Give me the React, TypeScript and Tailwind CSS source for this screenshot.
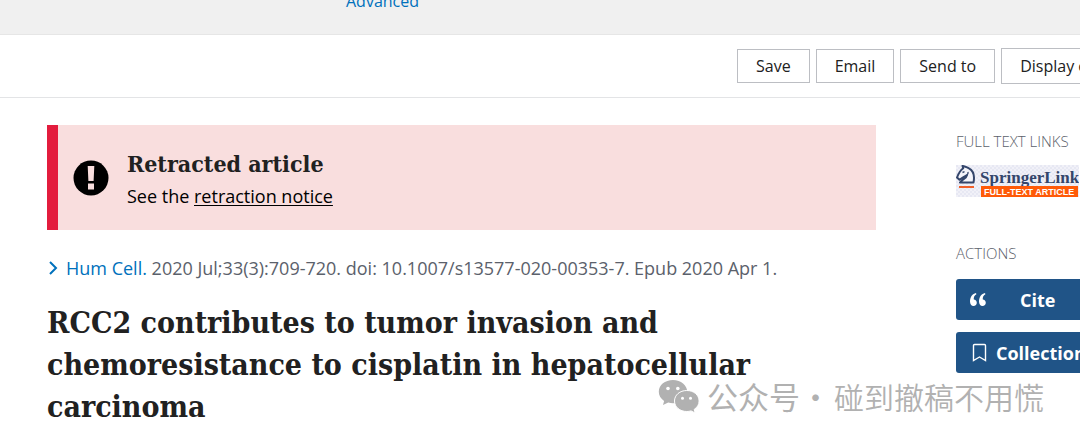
import React from "react";

function ToolbarButton({ className = "", children }: { className?: string; children: React.ReactNode }) {
  return (
    <button type="button" className={`shrink-0 border border-[#bcbec3] bg-white px-[18px] text-left text-base leading-6 text-[#212121] ${className}`}>
      {children}
    </button>
  );
}

function SpringerLogo() {
  return (
    <svg viewBox="0 0 123 32" className="block h-8 w-[123px]" role="img" aria-label="SpringerLink full-text article">
      <defs>
        <pattern id="weave" width="4" height="4" patternUnits="userSpaceOnUse">
          <rect width="4" height="4" fill="#f1f1f8" />
          <path d="M0 0h2v2H0zM2 2h2v2H2z" fill="#e7e8f3" />
        </pattern>
      </defs>
      <rect width="123" height="32" fill="url(#weave)" />
      <path d="M4 17.500h13.500c1.400-7-.5-12-4.500-14.200C10.500 1.800 8 1.500 6.500.8l.7 2.500C5 5 2.500 8.500 1 12.500l2.500 2.300 3.200-2.200 4.300-2.600C10.500 13.500 6 14.500 4 17.500z" fill="#f4f4fa" stroke="#34466b" strokeWidth="2" strokeLinejoin="round" />
      <path d="M6.500 7.500l2-.8M11 10c1-1 1.200-2 1-3" fill="none" stroke="#34466b" strokeWidth="1.400" />
      <rect x="3" y="21" width="15" height="2" fill="#f0602a" />
      <text x="24" y="18" fill="#34466b" fontSize="17" fontWeight="700" fontFamily="'Liberation Serif', serif">SpringerLink</text>
      <rect x="25" y="21" width="97" height="11" fill="#ff5a08" />
      <text x="28" y="30" fill="#fff" fontSize="9" fontWeight="700" fontFamily="'Liberation Sans', sans-serif">FULL-TEXT ARTICLE</text>
    </svg>
  );
}

function WeChatMark() {
  return (
    <svg viewBox="0 0 42 34" className="h-[34px] w-[42px] shrink-0" aria-hidden="true">
      <path d="M15 1C7 1 .8 6 .8 12.700c0 3.800 2 7 5.300 9.200L5 26l5.200-2.500c1.600.4 3.200.7 4.800.7 8 0 14.200-5 14.200-11.500S23 1 15 1z" fill="#b1b1b1" />
      <path d="M28.800 11.500c-7 0-12.300 4.600-12.300 10.500s5.300 10.500 12.300 10.500c1.500 0 2.900-.2 4.200-.6l4.200 2.100-1-3.600c3-2 4.900-4.800 4.900-8.400 0-5.900-5.300-10.500-12.300-10.500z" fill="#b1b1b1" stroke="#fff" strokeWidth="1" />
      <g fill="#fff">
        <circle cx="10" cy="9.500" r="1.800" />
        <circle cx="19.800" cy="9.500" r="1.800" />
        <circle cx="24.500" cy="19.300" r="1.500" />
        <circle cx="32.500" cy="19.300" r="1.500" />
      </g>
    </svg>
  );
}

export default function App() {
  return (
    <div className="relative overflow-hidden bg-white font-['Open_Sans','Noto_Sans',sans-serif] text-[#212121]">
      <header className="h-[35px] overflow-hidden border-b border-[#e6e6e6] bg-[#f0f0f0] pl-[346px]">
        <a href="#advanced" className="-mt-[11px] block w-fit text-base leading-6 text-[#0071bc]">Advanced</a>
      </header>

      <div className="flex h-[63px] items-center justify-end border-b border-[#e3e4e6]">
        <div className="flex w-[343px] items-center gap-1.5 whitespace-nowrap">
          <ToolbarButton className="py-1">Save</ToolbarButton>
          <ToolbarButton className="py-1">Email</ToolbarButton>
          <ToolbarButton className="py-1">Send to</ToolbarButton>
          <ToolbarButton className="py-[5px]">Display options</ToolbarButton>
        </div>
      </div>

      <div className="flex pt-[27px] pl-[47px]">
        <main className="min-w-0 flex-1">
          <section className="flex h-[105px] items-center border-l-[11px] border-[#e31c3d] bg-[#f9dede] pt-1 pl-[15px]">
            <svg viewBox="0 0 36 36" className="mb-1 h-9 w-9 shrink-0" aria-hidden="true">
              <circle cx="18" cy="18" r="17.500" fill="#000" />
              <path d="M14.700 6h6.600l-.7 15h-5.200zM15 23.500h6v6h-6z" fill="#f9dede" />
            </svg>
            <div className="pl-[18px]">
              <h2 className="font-['DejaVu_Serif_Condensed','DejaVu_Serif',serif] text-[23px] leading-8 font-bold">Retracted article</h2>
              <p className="text-lg leading-8 text-black">
                See the <a href="#notice" className="underline underline-offset-2">retraction notice</a>
              </p>
            </div>
          </section>

          <p className="flex items-center pt-[26px] text-lg leading-6 text-[#5b616b]">
            <svg viewBox="0 0 12 16" className="mr-[7px] h-4 w-3 shrink-0" aria-hidden="true">
              <path d="M3 2l6 6-6 6" fill="none" stroke="#0071bc" strokeWidth="2" />
            </svg>
            <span>
              <a href="#journal" className="text-[#0071bc]">Hum Cell.</a> 2020 Jul;33(3):709-720. doi: 10.1007/s13577-020-00353-7. Epub 2020 Apr 1.
            </span>
          </p>

          <h1 className="pt-[22px] font-['DejaVu_Serif_Condensed','DejaVu_Serif',serif] text-3xl leading-[42px] font-bold">
            RCC2 contributes to tumor invasion and<br />chemoresistance to cisplatin in hepatocellular<br />carcinoma
          </h1>
        </main>

        <aside className="ml-20 w-[124px] shrink-0 pt-1">
          <h3 className="text-[15px] leading-6 font-light whitespace-nowrap text-[#5b616b]">FULL TEXT LINKS</h3>
          <a href="#springer" className="mt-3 block">
            <SpringerLogo />
          </a>
          <h3 className="mt-11 text-[15px] leading-6 font-light text-[#5b616b]">ACTIONS</h3>
          <div className="mt-[14px] flex w-[160px] flex-col gap-3 text-lg font-bold text-white">
            <button type="button" className="flex h-[41px] items-center rounded-[3px] bg-[#205487] pl-[14px]">
              <svg viewBox="0 0 16 13" className="h-[13px] w-4" fill="#fff" aria-hidden="true">
                <path d="M6 0C2.500.8 0 4 0 8.500 0 11.200 1.400 13 3.500 13c2 0 3.300-1.400 3.300-3.200S5.500 6.600 3.800 6.600C3.500 4.400 4.300 2.500 6.400 1.200zM15 0c-3.500.8-6 4-6 8.500 0 2.700 1.400 4.500 3.500 4.500 2 0 3.300-1.400 3.300-3.200s-1.300-3.200-3-3.200c-.3-2.200.5-4.100 2.600-5.400z" />
              </svg>
              <span className="pl-[34px]">Cite</span>
            </button>
            <button type="button" className="flex h-[41px] items-center rounded-[3px] bg-[#205487] pl-4">
              <svg viewBox="0 0 15 19" className="h-[19px] w-[15px]" aria-hidden="true">
                <path d="M1.500 17.500V2.500q0-1 1-1h10q1 0 1 1v15l-6-3.500z" fill="none" stroke="#fff" strokeWidth="1.400" />
              </svg>
              <span className="pl-[9px]">Collections</span>
            </button>
          </div>
        </aside>
      </div>

      <div className="absolute top-[378px] left-[658px] flex items-center font-['Noto_Sans_CJK_SC',sans-serif] text-[31px] leading-9 whitespace-nowrap text-[#b1b1b1]">
        <WeChatMark />
        <span className="pl-[7px]">公众号</span>
        <span className="w-[30px] text-center">·</span>
        <span className="pl-1 text-[30px] font-[350]">碰到撤稿不用慌</span>
      </div>
    </div>
  );
}
